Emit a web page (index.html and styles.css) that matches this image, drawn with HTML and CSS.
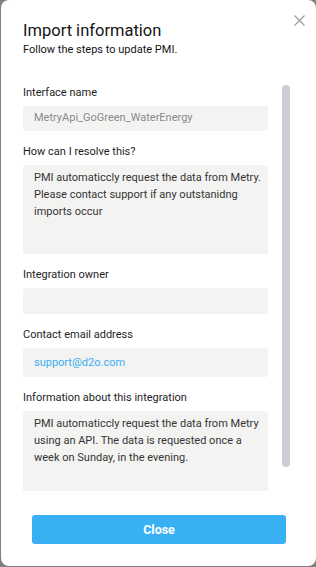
FILE: index.html
```html
<!DOCTYPE html>
<html lang="en">
<head>
  <meta charset="UTF-8">
  <title>Import information</title>
  <link rel="stylesheet" href="styles.css">
</head>
<body>
  <div class="dialog">
    <button class="close-x" type="button" aria-label="Close">
      <svg width="11" height="11" viewBox="0 0 11 11">
        <path d="M0.5 0.5 L10.5 10.5 M10.5 0.5 L0.5 10.5" stroke="#9a9a9a" stroke-width="1.2" fill="none"/>
      </svg>
    </button>

    <div class="header">
      <h1>Import information</h1>
      <p>Follow the steps to update PMI.</p>
    </div>

    <div class="scroller">
      <div class="body">
        <div class="field first">
          <label>Interface name</label>
          <div class="box box-input muted">MetryApi_GoGreen_WaterEnergy</div>
        </div>

        <div class="field">
          <label>How can I resolve this?</label>
          <div class="box box-area">PMI automaticcly request the data from Metry. Please contact support if any outstanidng imports occur</div>
        </div>

        <div class="field">
          <label>Integration owner</label>
          <div class="box box-input box-tall"></div>
        </div>

        <div class="field">
          <label>Contact email address</label>
          <div class="box box-link"><a href="#">support@d2o.com</a></div>
        </div>

        <div class="field">
          <label>Information about this integration</label>
          <div class="box box-area">PMI automaticcly request the data from Metry using an API. The data is requested once a week on Sunday, in the evening.</div>
        </div>
      </div>
      <div class="track"><div class="thumb"></div></div>
    </div>

    <div class="footer">
      <button class="btn-close" type="button">Close</button>
    </div>
  </div>
</body>
</html>
```

FILE: styles.css
```css
html, body { margin: 0; padding: 0; }
body { background: #7f7f7f; font-family: Roboto, "Liberation Sans", Arial, sans-serif; color: #222; }

.dialog { position: relative; margin-left: 1px; width: 315px; height: 566px; background: #fff; border-radius: 8px; box-sizing: border-box; padding: 0 0 0 22px; display: flex; flex-direction: column; }

.close-x { position: absolute; top: 15px; right: 11px; border: 0; background: none; padding: 0; width: 11px; height: 11px; cursor: pointer; }
.close-x svg { display: block; }

.header { padding-top: 21px; height: 78px; box-sizing: border-box; flex: none; }
.header h1 { margin: 0; font-size: 16.5px; font-weight: 400; line-height: 20px; color: #141414; }
.header p { margin: 2px 0 0; font-size: 11px; line-height: 14px; color: #141414; }

.scroller { display: flex; gap: 14px; height: 413px; flex: none; }
.body { width: 245px; overflow: hidden; }
.track { width: 8px; flex: none; }
.thumb { margin-top: 7px; height: 382px; background: #cdcdd3; border-radius: 4px; }

.field { margin-top: 13px; }
.field.first { margin-top: 7px; }
.field label { display: block; font-size: 11px; line-height: 16px; color: #1e1e1e; margin-bottom: 5px; }

.box { background: #f3f3f2; border-radius: 3px; box-sizing: border-box; font-size: 11px; color: #333; padding: 0 6px 0 11px; }
.box-input { height: 25px; line-height: 23px; }
.box-tall { height: 26px; }
.box-link { height: 29px; line-height: 29px; }
.box-area { height: 89px; line-height: 17px; padding-top: 4px; }
.muted { color: #8a8a8a; }
.box a { color: #38aef0; text-decoration: none; }

.footer { padding: 24px 0 0 9px; flex: none; }
.btn-close { display: block; width: 254px; height: 29px; border: 0; border-radius: 3px; background: #38b0f3; color: #fff; font-family: Roboto, "Liberation Sans", Arial, sans-serif; font-size: 12.5px; font-weight: 700; cursor: pointer; }
```
